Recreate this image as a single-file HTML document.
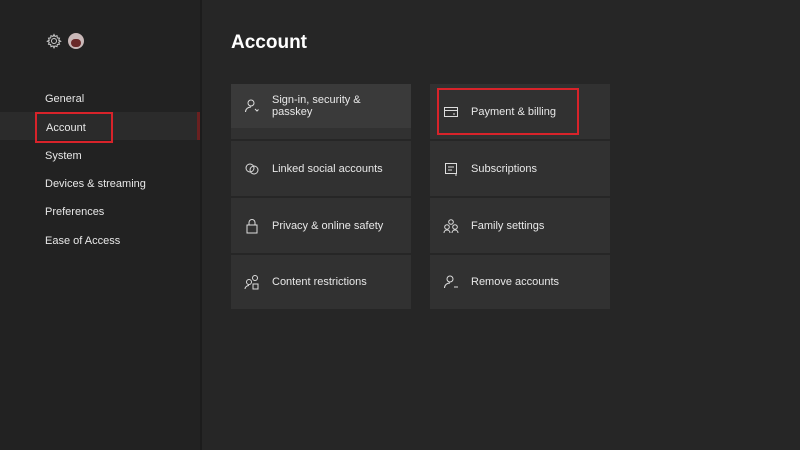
<!DOCTYPE html>
<html><head><style>
body{margin:0;width:800px;height:450px;background:#262626;font-family:"Liberation Sans",sans-serif;color:#e8e8e8;position:relative;overflow:hidden}
.side{position:absolute;left:0;top:0;width:200px;height:450px;background:#222}
.div{position:absolute;left:200px;top:0;width:2px;height:450px;background:#1c1c1c}
.nav{position:absolute;left:45px;font-size:11px}
.sel{position:absolute;left:0;top:112px;width:198px;height:28px;background:#2b2b2b}
.bar{position:absolute;left:197px;top:112px;width:3px;height:28px;background:#6a2020}
.red{position:absolute;border:2px solid #d8232a;box-sizing:border-box}
h1{position:absolute;left:231px;top:32px;margin:0;font-size:19px;font-weight:bold;color:#fff}
.t{position:absolute;width:180px;background:#313131;font-size:11px;box-sizing:border-box;display:flex;align-items:center;padding-left:41px}
.t svg{position:absolute;left:13px;top:50%;margin-top:-8px}
</style></head><body>
<div class="side"></div><div class="div"></div>
<svg style="position:absolute;left:46px;top:33px" width="16" height="16" viewBox="0 0 16 16" fill="none" stroke="#ccc" stroke-width="1"><circle cx="8" cy="8" r="2.5"/><path d="M8 1.5l1 2 2-.8.3 2.2 2.2.3-.8 2 2 1-2 1 .8 2-2.2.3-.3 2.2-2-.8-1 2-1-2-2 .8-.3-2.2-2.2-.3.8-2-2-1 2-1-.8-2 2.2-.3.3-2.2 2 .8z"/></svg>
<div style="position:absolute;left:68px;top:33px;width:16px;height:16px;border-radius:50%;background:#c9b8b8"><div style="position:absolute;left:3px;top:6px;width:10px;height:8px;border-radius:4px;background:#6a2a2a"></div></div>
<div class="sel"></div><div class="bar"></div>
<div class="nav" style="top:93px">General</div>
<div class="nav" style="top:122px;left:46px">Account</div>
<div class="nav" style="top:150px">System</div>
<div class="nav" style="top:178px">Devices &amp; streaming</div>
<div class="nav" style="top:206px">Preferences</div>
<div class="nav" style="top:235px">Ease of Access</div>
<div class="red" style="left:35px;top:112px;width:78px;height:31px"></div>
<h1>Account</h1>
<div class="t" style="left:231px;top:84px;height:44px;background:#3a3a3a">Sign-in, security &amp;<br>passkey<svg width="16" height="16" viewBox="0 0 16 16" fill="none" stroke="#ddd"><circle cx="7" cy="5" r="3"/><path d="M1.5 14c0-3 2.5-5 5.5-5"/><path d="M11 11l2 2 1.5-1.5"/></svg></div>
<div style="position:absolute;left:231px;top:128px;width:180px;height:11px;background:#313131"></div>
<div class="t" style="left:231px;top:141px;height:55px">Linked social accounts<svg width="16" height="16" viewBox="0 0 16 16" fill="none" stroke="#ddd"><circle cx="6" cy="7" r="4"/><circle cx="10" cy="9" r="4"/></svg></div>
<div class="t" style="left:231px;top:198px;height:55px">Privacy &amp; online safety<svg width="16" height="16" viewBox="0 0 16 16" fill="none" stroke="#ddd"><rect x="3" y="7" width="10" height="8"/><path d="M5 7V4.5a3 3 0 016 0V7"/></svg></div>
<div class="t" style="left:231px;top:255px;height:54px">Content restrictions<svg width="16" height="16" viewBox="0 0 16 16" fill="none" stroke="#ddd"><circle cx="5" cy="8" r="2.5"/><path d="M1 15c0-2 2-3.5 4-3.5"/><circle cx="11" cy="4" r="2.5"/><rect x="9" y="10" width="5" height="5"/></svg></div>
<div class="t" style="left:430px;top:84px;height:55px">Payment &amp; billing<svg width="16" height="16" viewBox="0 0 16 16" fill="none" stroke="#ddd"><rect x="1.5" y="3.5" width="13" height="9"/><path d="M1.5 6.5h13M10 10h2"/></svg></div>
<div class="t" style="left:430px;top:141px;height:55px">Subscriptions<svg width="16" height="16" viewBox="0 0 16 16" fill="none" stroke="#ddd"><rect x="2.5" y="2.5" width="11" height="10"/><path d="M5 6h6M5 9h4M12 14h2"/></svg></div>
<div class="t" style="left:430px;top:198px;height:55px">Family settings<svg width="16" height="16" viewBox="0 0 16 16" fill="none" stroke="#ddd"><circle cx="8" cy="4" r="2.3"/><circle cx="4" cy="9" r="2.3"/><circle cx="12" cy="9" r="2.3"/><path d="M1 15c0-2 1.5-3 3-3s3 1 3 3M9 15c0-2 1.5-3 3-3s3 1 3 3"/></svg></div>
<div class="t" style="left:430px;top:255px;height:54px">Remove accounts<svg width="16" height="16" viewBox="0 0 16 16" fill="none" stroke="#ddd"><circle cx="7" cy="5" r="3"/><path d="M1.5 14c0-3 2.5-5 5.5-5M11 13h4"/></svg></div>
<div class="red" style="left:437px;top:88px;width:142px;height:47px"></div>
</body></html>
